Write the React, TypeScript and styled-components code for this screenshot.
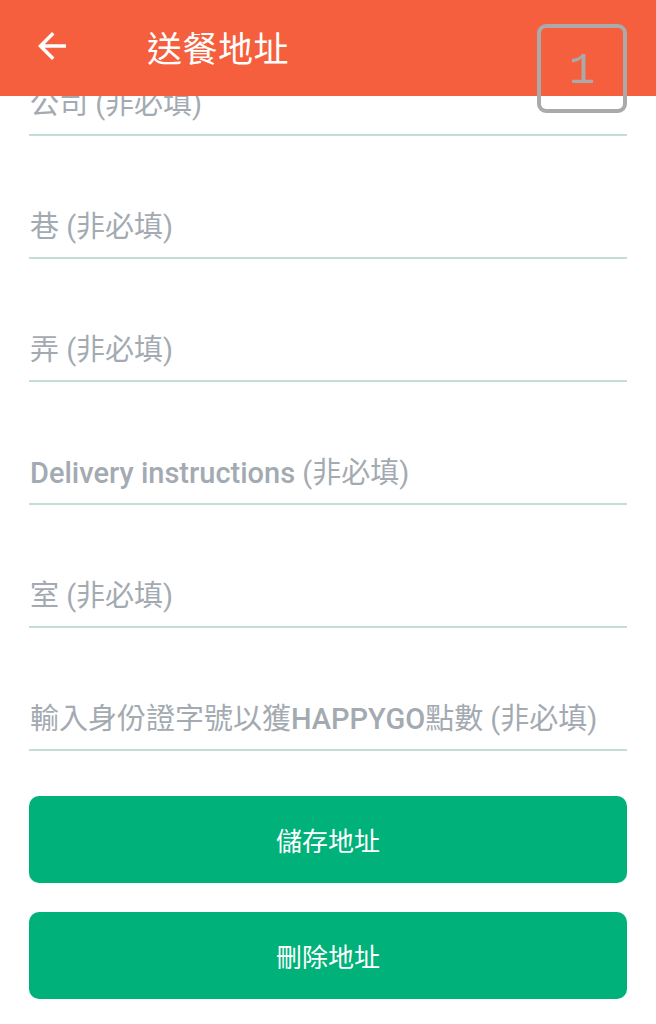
import styled, { createGlobalStyle } from 'styled-components'

const GlobalStyle = createGlobalStyle`
	html, body {
		margin: 0;
		padding: 0;
		background: #fff;
	}
	body {
		font-family: Roboto, 'Noto Sans CJK TC', sans-serif;
	}
`

const fields = [
	'公司 (非必填)',
	'巷 (非必填)',
	'弄 (非必填)',
	'Delivery instructions (非必填)',
	'室 (非必填)',
	'輸入身份證字號以獲HAPPYGO點數 (非必填)',
]

// latin words look heavier than the cjk glyphs in the placeholders
const splitRuns = (text: string) =>
	text.split(/([A-Za-z]+(?: [A-Za-z]+)*)/).filter(Boolean)

function BackArrow() {
	return (
		<svg width="42" height="42" viewBox="0 0 24 24" fill="#fff">
			<path d="M20 11H7.83l5.59-5.59L12 4l-8 8 8 8 1.41-1.41L7.83 13H20v-2z" />
		</svg>
	)
}

function App() {
	return (
		<>
			<GlobalStyle />
			<Header>
				<BackButton>
					<BackArrow />
				</BackButton>
				<Title>送餐地址</Title>
			</Header>
			<Badge>1</Badge>
			<Form>
				{fields.map((f) => (
					<Field key={f}>
						<Label>
							{splitRuns(f).map((run, i) =>
								/[A-Za-z]/.test(run) ? <Latin key={i}>{run}</Latin> : run
							)}
						</Label>
					</Field>
				))}
				<Actions>
					<Button>儲存地址</Button>
					<Button>刪除地址</Button>
				</Actions>
			</Form>
		</>
	)
}

const Header = styled.header`
	position: fixed;
	top: 0;
	left: 0;
	right: 0;
	height: 96px;
	background: #f55f3e;
	display: flex;
	align-items: center;
	padding-bottom: 4px;
	box-sizing: border-box;
	z-index: 2;
`

const BackButton = styled.div`
	width: 42px;
	height: 42px;
	margin-left: 31px;
	display: flex;
`

const Title = styled.h1`
	margin: 0 0 0 74px;
	color: #fff;
	font-family: 'Noto Sans CJK TC', sans-serif;
	font-weight: 400;
	font-size: 35px;
	letter-spacing: 0.5px;
	line-height: 1;
`

const Badge = styled.div`
	position: fixed;
	top: 24px;
	left: 537px;
	width: 90px;
	height: 89px;
	box-sizing: border-box;
	border: 4px solid #aaaaaa;
	border-radius: 9px;
	display: flex;
	align-items: center;
	justify-content: center;
	color: #aaaaaa;
	font-family: 'Liberation Mono', monospace;
	font-size: 44px;
	padding-top: 4px;
	z-index: 3;
`

const Form = styled.main`
	padding: 13px 29px 26px;
`

const Field = styled.div`
	height: 123px;
	box-sizing: border-box;
	border-bottom: 2px solid #bfe0d3;
	display: flex;
	align-items: flex-end;
	padding-bottom: 10px;
`

const Label = styled.span`
	color: #a3aab1;
	font-size: 29px;
	font-weight: 400;
	line-height: 40px;
	padding-left: 1px;
	white-space: nowrap;
`

const Latin = styled.span`
	font-weight: 500;
`

const Actions = styled.div`
	display: flex;
	flex-direction: column;
	gap: 29px;
	margin-top: 45px;
`

const Button = styled.button`
	height: 87px;
	border: none;
	border-radius: 10px;
	background: #00b27a;
	color: #fff;
	font-family: 'Noto Sans CJK TC', sans-serif;
	font-size: 26px;
	cursor: pointer;
`

export default App
